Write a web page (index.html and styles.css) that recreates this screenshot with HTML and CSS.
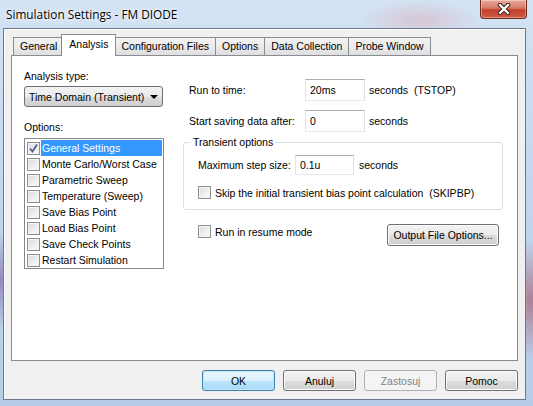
FILE: index.html
```html
<!DOCTYPE html>
<html lang="pl">
<head>
    <meta charset="UTF-8">
    <title>Simulation Settings - FM DIODE</title>
    <link rel="stylesheet" href="styles.css">
</head>
<body>
    <div class="window">
        <div class="titlebar">
            <div class="title">Simulation Settings - FM DIODE</div>
            <div class="close-btn">
                <svg width="14" height="12" viewBox="0 0 14 12">
                    <path d="M3 2 L11 10 M11 2 L3 10" stroke="#3b2320" stroke-width="4.4" stroke-linecap="round"/>
                    <path d="M3 2 L11 10 M11 2 L3 10" stroke="#fff" stroke-width="2.4" stroke-linecap="round"/>
                </svg>
            </div>
        </div>

        <div class="client">
            <div class="tabs">
                <div class="tab">General</div>
                <div class="tab active">Analysis</div>
                <div class="tab">Configuration Files</div>
                <div class="tab">Options</div>
                <div class="tab">Data Collection</div>
                <div class="tab">Probe Window</div>
            </div>

            <div class="panel">
                <div class="left-col">
                    <div class="caption first">Analysis type:</div>
                    <div class="combo">
                        <span>Time Domain (Transient)</span>
                        <span class="combo-arrow"></span>
                    </div>
                    <div class="caption">Options:</div>
                    <div class="listbox">
                        <div class="list-item selected"><span class="cb checked"><svg width="11" height="11" viewBox="0 0 11 11"><path d="M2 5.5 L4.5 8.5 L9 1.5" fill="none" stroke="#4b5e8f" stroke-width="1.8"/></svg></span><span class="item-text">General Settings</span></div>
                        <div class="list-item"><span class="cb"></span><span class="item-text">Monte Carlo/Worst Case</span></div>
                        <div class="list-item"><span class="cb"></span><span class="item-text">Parametric Sweep</span></div>
                        <div class="list-item"><span class="cb"></span><span class="item-text">Temperature (Sweep)</span></div>
                        <div class="list-item"><span class="cb"></span><span class="item-text">Save Bias Point</span></div>
                        <div class="list-item"><span class="cb"></span><span class="item-text">Load Bias Point</span></div>
                        <div class="list-item"><span class="cb"></span><span class="item-text">Save Check Points</span></div>
                        <div class="list-item"><span class="cb"></span><span class="item-text">Restart Simulation</span></div>
                    </div>
                </div>

                <div class="right-col">
                    <div class="field-row first">
                        <span class="field-label">Run to time:</span>
                        <span class="textbox">20ms</span>
                        <span class="units">seconds&nbsp; (TSTOP)</span>
                    </div>
                    <div class="field-row">
                        <span class="field-label">Start saving data after:</span>
                        <span class="textbox">0</span>
                        <span class="units">seconds</span>
                    </div>

                    <fieldset class="group">
                        <legend>Transient options</legend>
                        <div class="step-row">
                            <span class="step-label">Maximum step size:</span>
                            <span class="textbox small">0.1u</span>
                            <span class="units">seconds</span>
                        </div>
                        <div class="check-row skip">
                            <span class="cb"></span>
                            <span>Skip the initial transient bias point calculation&nbsp; (SKIPBP)</span>
                        </div>
                    </fieldset>

                    <div class="resume-row">
                        <div class="check-row">
                            <span class="cb"></span>
                            <span>Run in resume mode</span>
                        </div>
                        <div class="button wide">Output File Options...</div>
                    </div>
                </div>
            </div>

            <div class="dialog-buttons">
                <div class="button default">OK</div>
                <div class="button">Anuluj</div>
                <div class="button disabled">Zastosuj</div>
                <div class="button">Pomoc</div>
            </div>
        </div>
    </div>
</body>
</html>
```

FILE: styles.css
```css
body {
    margin: 0;
    width: 533px;
    height: 406px;
    overflow: hidden;
    font-family: "Liberation Sans", Arial, sans-serif;
    font-size: 10.5px;
    color: #000;
    white-space: nowrap;
}
.window {
    height: 406px;
    background:
        radial-gradient(ellipse 30px 60px at 531px 300px, rgba(160, 60, 80, 0.55), transparent),
        radial-gradient(ellipse 20px 50px at 0px 280px, rgba(120, 90, 160, 0.6), transparent),
        radial-gradient(ellipse 60px 20px at 420px 20px, rgba(220, 170, 180, 0.5), transparent),
        linear-gradient(180deg, #d3e3f4 0%, #c4d8ef 40%, #b5cdea 100%);
}
.titlebar {
    height: 28px;
    display: flex;
    justify-content: space-between;
    align-items: flex-start;
}
.title {
    font-family: "Open Sans", "Liberation Sans", sans-serif;
    font-size: 11.8px;
    margin: 6px 0 0 6px;
    text-shadow: 0 0 6px #fff, 0 0 3px #fff;
}
.close-btn {
    width: 45px;
    height: 18px;
    margin-right: 6px;
    border: 1px solid #6d2b23;
    border-top: none;
    border-radius: 0 0 4px 4px;
    background: linear-gradient(180deg, #e9a99b 0%, #d77a6a 45%, #c2402c 55%, #cd5a40 100%);
    box-shadow: inset 0 0 0 1px rgba(255, 255, 255, 0.35);
    display: flex;
    align-items: center;
    justify-content: center;
}
.client {
    margin-left: 3px;
    width: 523px;
    height: 372px;
    box-sizing: border-box;
    border: 1px solid #6a7888;
    background: #f0f0f0;
    box-shadow: inset 1px 1px 0 #fff;
    padding: 6px 7px 0 7px;
}

/* tab strip */
.tabs {
    display: flex;
    align-items: flex-end;
    height: 20px;
    padding-left: 2px;
}
.tab {
    height: 17px;
    line-height: 17px;
    padding: 0 6px;
    border: 1px solid #898c95;
    border-bottom: none;
    margin-right: -1px;
    background: linear-gradient(180deg, #f3f3f3 0%, #ebebeb 50%, #dedede 100%);
}
.tab.active {
    height: 21px;
    line-height: 19px;
    margin: 0 -1px -1px -2px;
    padding: 0 7px;
    background: #fff;
    position: relative;
    z-index: 1;
}
.tab.active + .tab {
    margin-left: -1px;
}
.panel {
    height: 306px;
    box-sizing: border-box;
    border: 1px solid #898c95;
    background: #fff;
    display: flex;
    padding-left: 12px;
}

/* left column */
.left-col {
    width: 140px;
}
.caption {
    height: 13px;
    line-height: 13px;
    margin-top: 14px;
}
.combo {
    margin-top: 3px;
    width: 139px;
    height: 21px;
    box-sizing: border-box;
    border: 1px solid #707070;
    border-radius: 3px;
    background: linear-gradient(180deg, #f2f2f2 0%, #ebebeb 50%, #dddddd 51%, #cfcfcf 100%);
    display: flex;
    align-items: center;
    justify-content: space-between;
    padding: 0 4px 0 4px;
}
.combo-arrow {
    width: 0;
    height: 0;
    border-left: 4px solid transparent;
    border-right: 4px solid transparent;
    border-top: 4px solid #000;
}
.listbox {
    margin-top: 4px;
    width: 140px;
    height: 131px;
    box-sizing: border-box;
    border: 1px solid #828790;
    padding-top: 1px;
}
.list-item {
    height: 16px;
    display: flex;
    align-items: center;
    padding-left: 2px;
}
.item-text {
    flex: 1;
    height: 16px;
    line-height: 16px;
    margin: 0 1px 0 1px;
    padding-left: 1px;
}
.list-item.selected .item-text {
    background: #3399ff;
    color: #fff;
}

/* checkbox */
.cb {
    width: 13px;
    height: 13px;
    box-sizing: border-box;
    border: 1px solid #8e8f8f;
    background: linear-gradient(135deg, #dadada 0%, #f0f0f0 60%, #fbfbfb 100%);
    box-shadow: inset 0 0 0 1px #f4f4f4;
    flex-shrink: 0;
    display: flex;
    align-items: center;
    justify-content: center;
}
.cb.checked svg {
    display: block;
}

/* right column */
.right-col {
    width: 320px;
    margin-left: 19px;
}
.field-row {
    display: flex;
    align-items: center;
    height: 22px;
    margin-top: 9px;
}
.field-row.first {
    margin-top: 23px;
}
.field-label {
    width: 116px;
    padding-left: 6px;
}
.textbox {
    width: 60px;
    height: 22px;
    box-sizing: border-box;
    border: 1px solid #abadb3;
    border-color: #abadb3 #dbdfe6 #e3e9ef #e2e3ea;
    padding-left: 4px;
    line-height: 20px;
}
.textbox.small {
    width: 59px;
    height: 20px;
    line-height: 18px;
}
.units {
    margin-left: 4px;
}
.group {
    margin: 4px 0 0 0;
    min-width: 0;
    width: 320px;
    box-sizing: border-box;
    border: 1px solid #d5dfe5;
    border-radius: 3px;
    padding: 6px 0 10px 14px;
}
.group legend {
    margin-left: -7px;
    padding: 0 2px;
    height: 13px;
    line-height: 13px;
}
.step-row {
    display: flex;
    align-items: center;
    height: 20px;
}
.step-label {
    width: 97px;
}
.step-row .units {
    margin-left: 5px;
}
.check-row {
    display: flex;
    align-items: center;
    gap: 4px;
    height: 13px;
}
.check-row.skip {
    margin-top: 11px;
}
.resume-row {
    margin-top: 14px;
    display: flex;
    justify-content: space-between;
    align-items: flex-start;
    padding: 0 4px 0 15px;
}
.resume-row .check-row {
    margin-top: 1px;
}

/* push buttons */
.button {
    width: 73px;
    height: 21px;
    box-sizing: border-box;
    border: 1px solid #707070;
    border-radius: 3px;
    background: linear-gradient(180deg, #f2f2f2 0%, #ebebeb 50%, #dddddd 51%, #cfcfcf 100%);
    box-shadow: inset 0 0 0 1px #fcfcfc;
    display: flex;
    align-items: center;
    justify-content: center;
}
.button.wide {
    width: 112px;
    height: 22px;
}
.button.default {
    border-color: #3c7fb1;
    background: linear-gradient(180deg, #eaf6fd 0%, #d9f0fc 50%, #bee6fd 51%, #a7d9f5 100%);
    box-shadow: inset 0 0 0 1px #c4e5f6;
}
.button.disabled {
    border-color: #adb2b5;
    background: #f4f4f4;
    box-shadow: none;
    color: #838383;
}
.dialog-buttons {
    margin-top: 9px;
    display: flex;
    justify-content: flex-end;
    gap: 8px;
}
```
